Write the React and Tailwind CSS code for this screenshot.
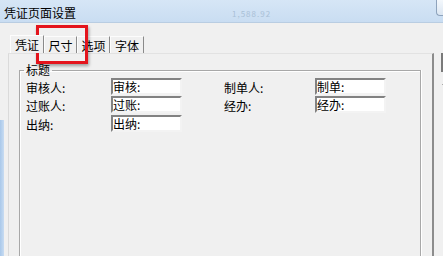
import React from "react";

const rows = [
  { label: "审核人:", value: "审核:", right: { label: "制单人:", value: "制单:" } },
  { label: "过账人:", value: "过账:", right: { label: "经办:", value: "经办:" } },
  { label: "出纳:", value: "出纳:" },
];

function Field({ value }) {
  return (
    <div className="w-[71px] h-[17px] bg-white border-2 border-t-[#828282] border-l-[#828282] border-r-[#f3f3f3] border-b-[#f3f3f3] leading-[13px] text-[12px] pl-[0px]">
      {value}
    </div>
  );
}

export default function App() {
  return (
    <div
      className="relative w-[443px] h-[256px] overflow-hidden bg-[#f0f0f0] text-black text-[12px]"
      style={{ fontFamily: '"Noto Sans CJK SC", "Noto Sans", sans-serif' }}
    >
      {/* Title bar */}
      <div className="relative h-[23px] bg-gradient-to-b from-[#d6e6f6] to-[#c9ddf2] border-b border-[#b9cde2] pl-[4px] pt-[4px]">
        <span className="leading-[14px] text-[12px]">凭证页面设置</span>
        <span className="absolute left-[232px] top-[8px] text-[8px] text-[#a9bfd6] tracking-[1px]">1,588.92</span>
        <div className="absolute right-0 top-0 w-[7px] h-[16px] rounded-bl-[4px] border-l border-b border-[#8ea3bc] bg-gradient-to-b from-[#f4f8fc] to-[#dbe6f2]" />
      </div>

      {/* Body */}
      <div className="flex h-[233px]">
        <div className="w-[8px] flex flex-col">
          <div className="mt-[97px] flex-1 w-[4px] bg-gradient-to-r from-[#a9c8ea] to-[#c8dcf2]" />
        </div>

        <div className="w-[426px] flex flex-col pt-[13px]">
          {/* Tabs */}
          <div className="flex h-[17px] ml-[2px]">
            <div className="w-[34px] h-[18px] -mt-[1px] border-t border-l border-[#fdfdfd] border-r border-r-[#8a8a8a] bg-[#f0f0f0] text-center leading-[18px] relative z-10">凭证</div>
            <div className="w-[33px] border-t border-l border-[#fcfcfc] border-r border-r-[#8a8a8a] text-center leading-[16px] pt-[1px]">尺寸</div>
            <div className="w-[33px] border-t border-l border-[#fcfcfc] border-r border-r-[#8a8a8a] text-center leading-[16px] pt-[1px]">选项</div>
            <div className="w-[34px] border-t border-l border-[#fcfcfc] border-r border-r-[#8a8a8a] text-center leading-[16px] pt-[1px]">字体</div>
          </div>

          {/* Panel */}
          <div className="flex-1 flex flex-col border-t border-l border-t-[#e2e2e2] border-l-[#dadada] border-r-2 border-r-[#8c8c8c] pl-[10px] pr-[11px] pt-[9px]">
            <fieldset className="flex-1 border border-[#a8a8a8] border-b-0 shadow-[inset_1px_1px_0_#ffffff,1px_0_0_#ffffff] pl-[6px]">
              <legend className="px-[2px] -ml-[2px] leading-[14px] text-[12px]">标题</legend>
              {rows.map((r, i) => (
                <div
                  key={i}
                  className={`flex items-center h-[17px] ${i === 0 ? "mt-[1px]" : i === 1 ? "mt-[1px]" : "mt-[2px]"}`}
                >
                  <div className="w-[85px] leading-[17px] pt-[2px]">{r.label}</div>
                  <Field value={r.value} />
                  {r.right && (
                    <>
                      <div className="ml-[42px] w-[91px] leading-[17px] pt-[2px]">{r.right.label}</div>
                      <Field value={r.right.value} />
                    </>
                  )}
                </div>
              ))}
            </fieldset>
          </div>
        </div>

        <div className="w-[9px] flex flex-col pt-[30px]">
          <div className="ml-[7px] h-[19px] border-l-2 border-t border-[#7a7a7a]" />
          <div className="ml-[8px] mt-[12px] h-[1px] w-[1px] bg-[#aaaaaa]" />
        </div>
      </div>

      {/* Red highlight */}
      <div className="absolute left-[36px] top-[25px] w-[52px] h-[39px] border-[3px] border-[#e4141c] shadow-[1px_2px_3px_rgba(0,0,0,0.35)]" />
    </div>
  );
}
